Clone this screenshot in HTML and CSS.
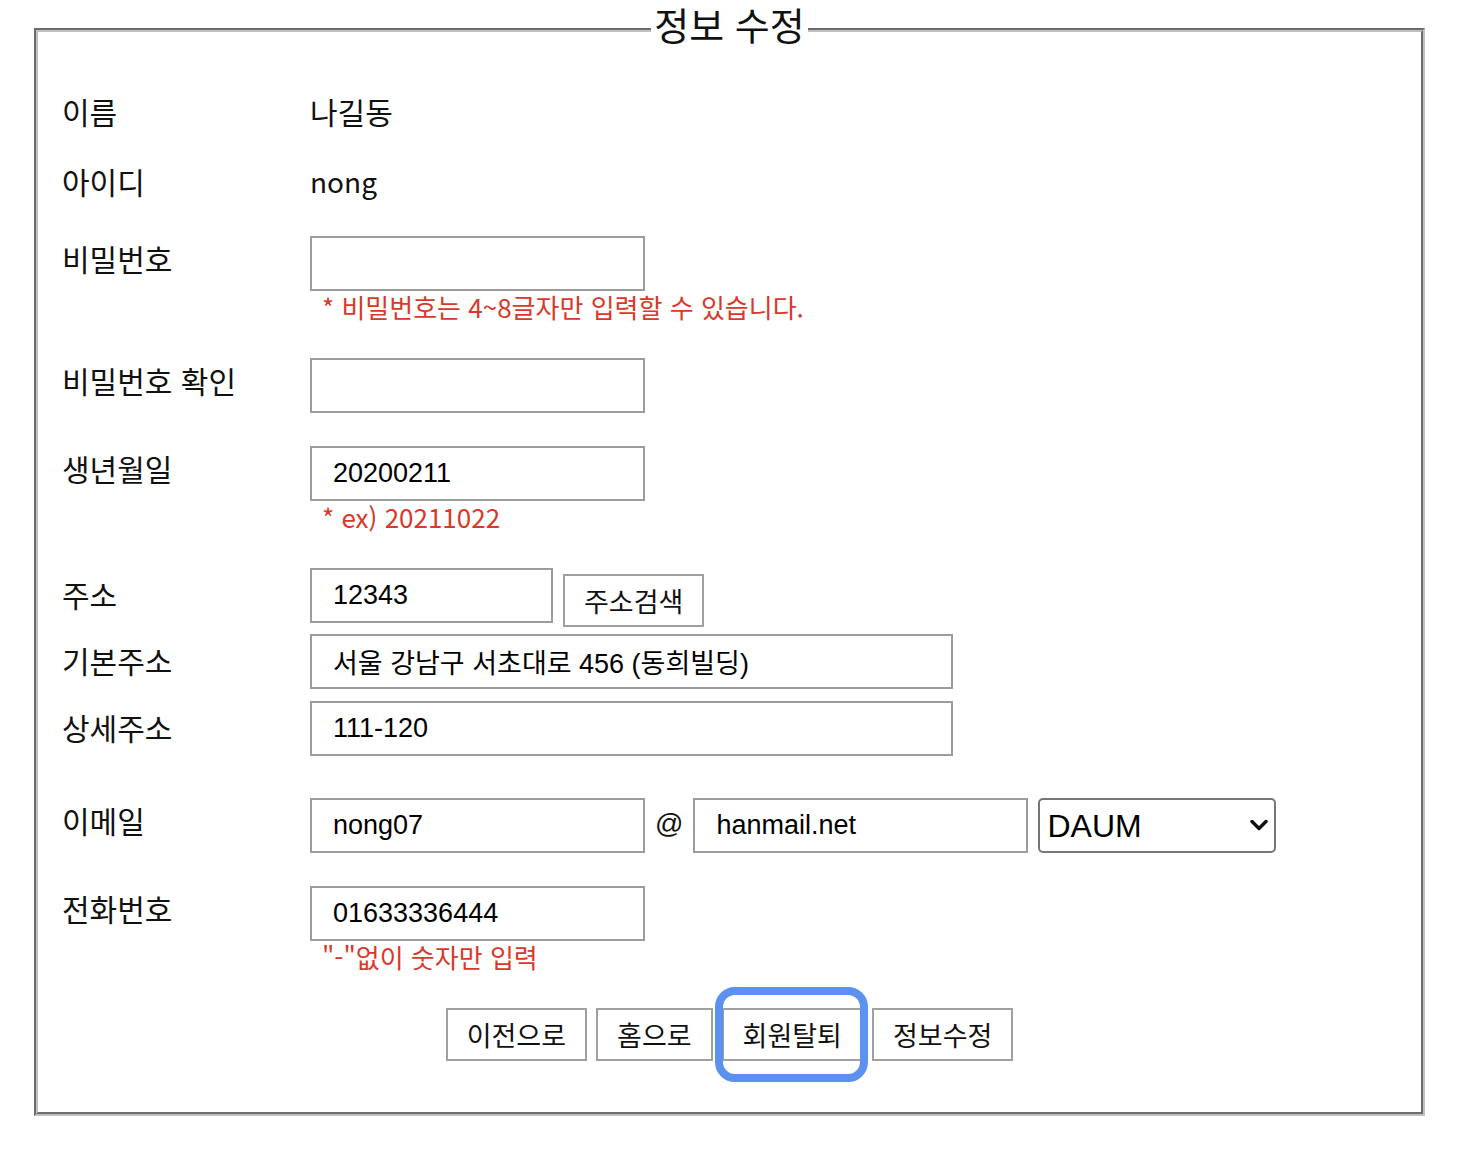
FILE: index.html
```html
<!DOCTYPE html>
<html lang="ko">
<head>
    <meta charset="UTF-8">
    <meta name="viewport" content="width=device-width, initial-scale=1.0">
    <title>정보 수정</title>
    <link rel="stylesheet" href="styles.css">
</head>
<body>
    <fieldset class="edit-box">
        <legend>정보 수정</legend>

        <div class="row row-name">
            <div class="label">이름</div>
            <div class="value text">나길동</div>
        </div>
        <div class="row row-id">
            <div class="label">아이디</div>
            <div class="value text latin">nong</div>
        </div>
        <div class="row row-pw">
            <div class="label">비밀번호</div>
            <div class="value">
                <input type="password" class="field short">
                <div class="note">* 비밀번호는 4~8글자만 입력할 수 있습니다.</div>
            </div>
        </div>
        <div class="row row-pw2">
            <div class="label">비밀번호 확인</div>
            <div class="value">
                <input type="password" class="field short">
            </div>
        </div>
        <div class="row row-birth">
            <div class="label">생년월일</div>
            <div class="value">
                <input type="text" class="field short" value="20200211">
                <div class="note">* ex) 20211022</div>
            </div>
        </div>
        <div class="row row-zip addr">
            <div class="label">주소</div>
            <div class="value inline">
                <input type="text" class="field zip" value="12343">
                <button type="button" class="btn zip-btn">주소검색</button>
            </div>
        </div>
        <div class="row row-addr1 addr">
            <div class="label">기본주소</div>
            <div class="value">
                <input type="text" class="field wide" value="서울 강남구 서초대로 456 (동희빌딩)">
            </div>
        </div>
        <div class="row row-addr2 addr">
            <div class="label">상세주소</div>
            <div class="value">
                <input type="text" class="field wide" value="111-120">
            </div>
        </div>
        <div class="row row-email">
            <div class="label">이메일</div>
            <div class="value inline email">
                <input type="text" class="field short" value="nong07">
                <span class="at">@</span>
                <input type="text" class="field short" value="hanmail.net">
                <span class="select-wrap">
                    <select class="domain">
                        <option>DAUM</option>
                        <option>NAVER</option>
                        <option>GMAIL</option>
                        <option>직접입력</option>
                    </select>
                    <svg class="chevron" width="18" height="12" viewBox="0 0 18 12">
                        <polyline points="2,2.5 9,9.5 16,2.5" fill="none" stroke="#111" stroke-width="3.4" stroke-linecap="round" stroke-linejoin="round"/>
                    </svg>
                </span>
            </div>
        </div>
        <div class="row row-tel">
            <div class="label">전화번호</div>
            <div class="value">
                <input type="text" class="field short" value="01633336444">
                <div class="note">"-"없이 숫자만 입력</div>
            </div>
        </div>

        <div class="buttons">
            <button type="button" class="btn">이전으로</button>
            <button type="button" class="btn">홈으로</button>
            <button type="button" class="btn focused">회원탈퇴</button>
            <button type="button" class="btn">정보수정</button>
        </div>
    </fieldset>
</body>
</html>
```

FILE: styles.css
```css
body {
    margin: 0;
    background: #fff;
    color: #111;
    font-family: "Noto Sans CJK KR", sans-serif;
}
.edit-box {
    width: 1391px;
    box-sizing: border-box;
    margin: 4px 0 0 34px;
    padding: 0 24px 51px;
    border: 4px groove rgb(192, 192, 192);
}
.edit-box legend {
    margin: 0 auto;
    padding: 0 3px 11px;
    font-size: 38px;
    line-height: 40px;
    color: #111;
}
.row {
    display: flex;
    align-items: flex-start;
}
.label {
    flex: none;
    width: 248px;
    font-size: 30px;
    line-height: 40px;
    margin-top: 2px;
}
.addr .label {
    margin-top: 6px;
}
.row-name .label,
.row-id .label {
    margin-top: 0;
}
.value.text {
    font-size: 30px;
    line-height: 40px;
}
.value.latin {
    font-size: 28px;
}
.value.inline {
    display: flex;
    align-items: flex-start;
    gap: 10px;
}
.value.email {
    align-items: center;
}

.row-name  { margin-top: 36px; }
.row-id    { margin-top: 30px; }
.row-pw    { margin-top: 35px; }
.row-pw2   { margin-top: 35px; }
.row-birth { margin-top: 33px; }
.row-zip   { margin-top: 35px; }
.row-addr1 { margin-top: 7px; }
.row-addr2 { margin-top: 12px; }
.row-email { margin-top: 42px; }
.row-tel   { margin-top: 33px; }

.field {
    display: block;
    box-sizing: border-box;
    height: 55px;
    margin: 0;
    padding: 0 21px;
    border: 2px solid #9c9c9c;
    background: #fff;
    color: #000;
    font-family: "Liberation Sans", "Noto Sans CJK KR", sans-serif;
    font-size: 27px;
    outline: none;
}
.field.short { width: 335px; }
.field.zip   { width: 243px; }
.field.wide  { width: 643px; }

.note {
    padding-left: 12px;
    font-size: 26px;
    line-height: 32px;
    color: #d9382a;
}

.btn {
    box-sizing: border-box;
    height: 53px;
    margin: 0;
    padding: 0 19px;
    border: 2px solid #a0a0a0;
    background: #fff;
    color: #111;
    font-family: "Noto Sans CJK KR", sans-serif;
    font-size: 27px;
    line-height: 1;
    cursor: pointer;
}
.zip-btn {
    margin-top: 6px;
}

.at {
    font-family: "Liberation Sans", sans-serif;
    font-size: 28px;
    line-height: 40px;
    margin-top: -4px;
}
.select-wrap {
    position: relative;
    display: block;
}
.domain {
    display: block;
    box-sizing: border-box;
    width: 238px;
    height: 55px;
    padding: 0 0 0 7px;
    border: 2px solid #767676;
    border-radius: 5px;
    background: #fff;
    color: #000;
    font-family: "Liberation Sans", sans-serif;
    font-size: 32px;
    appearance: none;
    -webkit-appearance: none;
    outline: none;
}
.chevron {
    position: absolute;
    right: 8px;
    top: 21px;
    pointer-events: none;
}

.buttons {
    display: flex;
    justify-content: center;
    gap: 9px;
    margin-top: 35px;
}
.btn.focused {
    position: relative;
}
.btn.focused::after {
    content: "";
    position: absolute;
    left: -9px;
    right: -7px;
    top: -23px;
    bottom: -23px;
    border: 8px solid #5d91f1;
    border-radius: 20px;
}
```
